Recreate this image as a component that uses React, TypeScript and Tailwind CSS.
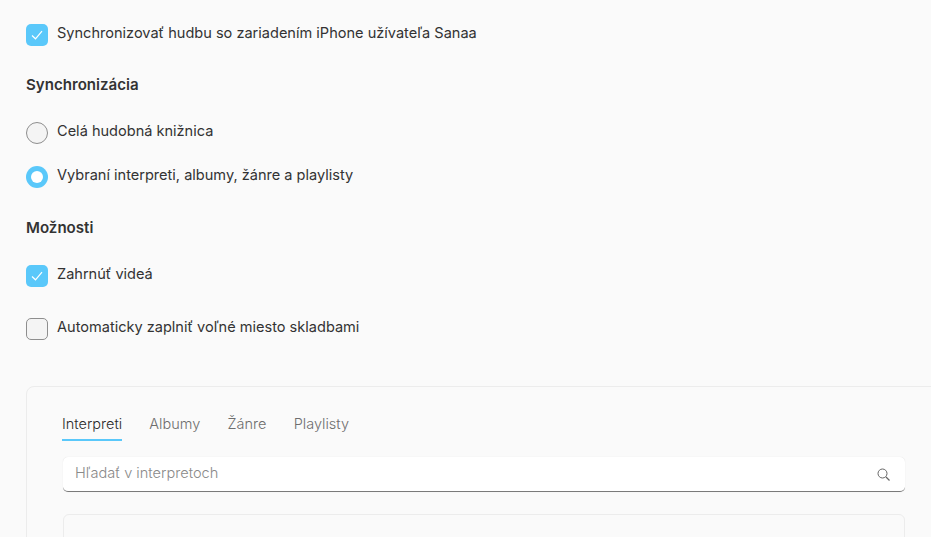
import React, { FC } from "react";

/* INTERFACES */
interface OptionProps {
  label: string;
  checked?: boolean;
  className: string;
}

/* COMPONENTS */
const CheckBox: FC<OptionProps> = ({ label, checked, className }) => (
  <div className={`flex items-start gap-[9px] ${className}`}>
    {checked ? (
      <div className="w-[22px] h-[22px] rounded-[5px] bg-[#5ac8fa] flex items-center justify-center">
        <svg width="12" height="10" viewBox="0 0 12 10" fill="none">
          <path d="M1 5.5 L4.5 8.8 L11 1.2" stroke="#fff" strokeWidth="1.2" />
        </svg>
      </div>
    ) : (
      <div className="w-[22px] h-[22px] rounded-[5px] bg-[#f4f4f4] border border-[#8e8e8e]" />
    )}
    <span className="text-[14.55px] leading-[18px] text-[#333333]">{label}</span>
  </div>
);

const Radio: FC<OptionProps> = ({ label, checked, className }) => (
  <div className={`flex items-start gap-[9px] ${className}`}>
    {checked ? (
      <div className="w-[22px] h-[22px] rounded-full bg-[#5ac8fa] flex items-center justify-center">
        <div className="w-[12px] h-[12px] rounded-full bg-white" />
      </div>
    ) : (
      <div className="w-[22px] h-[22px] rounded-full bg-[#f4f4f4] border border-[#8e8e8e]" />
    )}
    <span className="text-[14.55px] leading-[18px] text-[#333333]">{label}</span>
  </div>
);

const tabs = ["Albumy", "Žánre", "Playlisty"];

export default function App() {
  return (
    <div className="h-[537px] w-[931px] overflow-hidden bg-[#fafafa] pl-[26px] pt-6 font-['Inter',sans-serif]">
      <CheckBox label="Synchronizovať hudbu so zariadením iPhone užívateľa Sanaa" checked className="" />
      <h2 className="mt-[30px] text-[15.1px] leading-[18px] font-semibold text-[#333333]">Synchronizácia</h2>
      <Radio label="Celá hudobná knižnica" className="mt-[28px]" />
      <Radio label="Vybraní interpreti, albumy, žánre a playlisty" checked className="mt-[22px]" />
      <h2 className="mt-[31px] text-[15.1px] leading-[18px] font-semibold text-[#333333]">Možnosti</h2>
      <CheckBox label="Zahrnúť videá" checked className="mt-[28px]" />
      <CheckBox label="Automaticky zaplniť voľné miesto skladbami" className="mt-[31px]" />

      <div className="mt-[46px] w-[960px] h-[200px] rounded-tl-[8px] border border-[#ececec] pl-[35px] pt-[28px]">
        <div className="flex items-start gap-[27.3px] h-[26px] w-[300px] text-[14.5px] leading-[18px] font-light">
          <div className="w-[60px] h-[26px] border-b-2 border-[#5ac8fa] text-[#2b2b2b] whitespace-nowrap">Interpreti</div>
          {tabs.map((tab) => (
            <span key={tab} className="text-[#6e6e6e]">{tab}</span>
          ))}
        </div>
        <div className="ml-px mt-[16px] w-[842px] h-[35px] rounded-[5px] bg-white border-b border-b-[#7a7a7a] shadow-[0_0_1px_rgba(0,0,0,0.15)] flex items-center justify-between pl-[12px] pr-[15px]">
          <span className="text-[14.6px] text-[#8a8a8a] font-light">Hľadať v interpretoch</span>
          <svg width="13" height="13" viewBox="0 0 13 13" fill="none">
            <circle cx="5.5" cy="5.5" r="4.5" stroke="#666" strokeWidth="1" />
            <path d="M9 9 L12.5 12.5" stroke="#666" strokeWidth="1.2" />
          </svg>
        </div>
        <div className="ml-px mt-[22px] w-[842px] h-[60px] rounded-[6px] border border-[#ececec]" />
      </div>
    </div>
  );
}
